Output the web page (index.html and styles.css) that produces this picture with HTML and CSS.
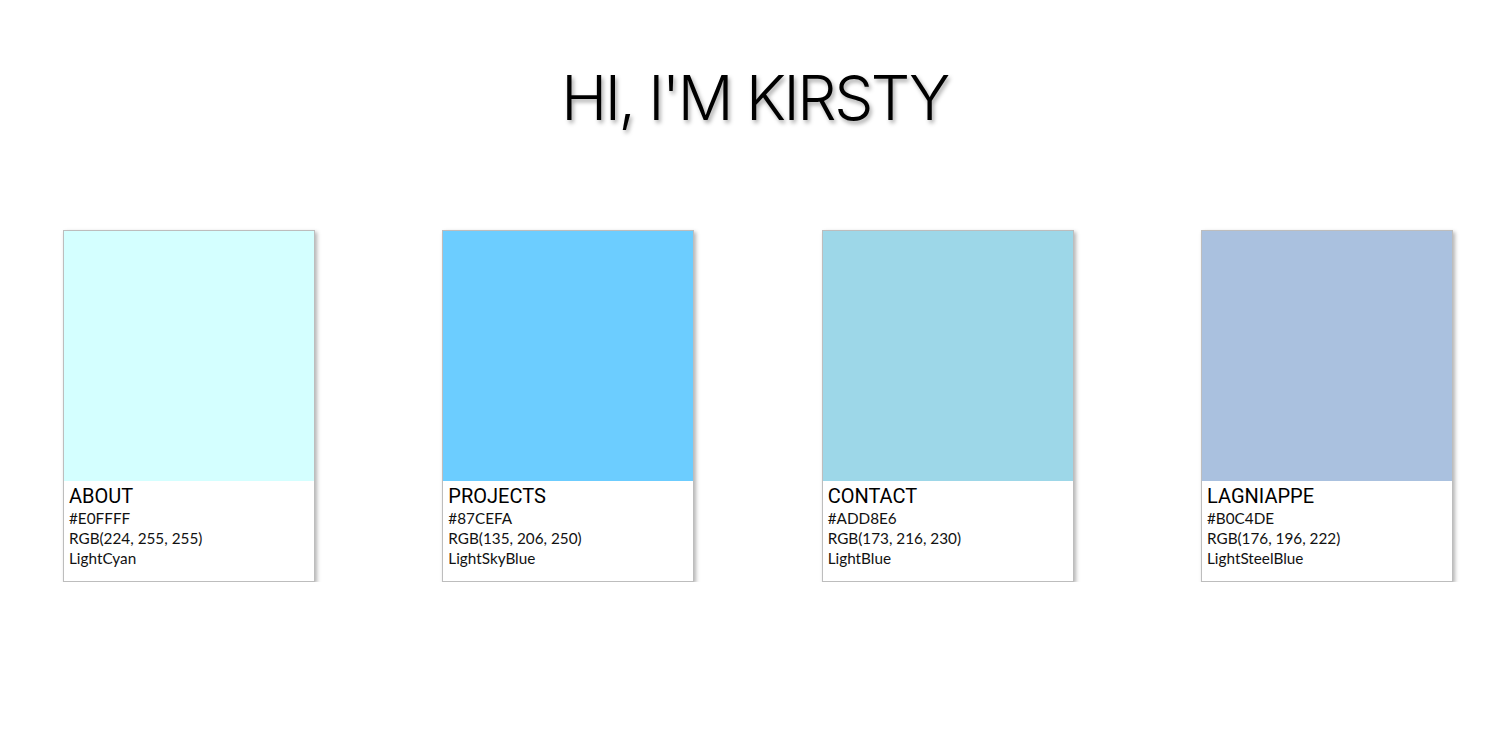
FILE: index.html
```html
<!DOCTYPE html>
<html lang="en">
<head>
<meta charset="utf-8">
<title>Kirsty</title>
<link rel="stylesheet" href="styles.css">
</head>
<body>
<header class="hero">
  <h1 class="hero-title">HI, I'M KIRSTY</h1>
</header>
<main class="cards">
  <div class="card">
    <div class="swatch swatch-about"></div>
    <div class="info">
      <div class="name">ABOUT</div>
      <div class="line">#E0FFFF</div>
      <div class="line">RGB(224, 255, 255)</div>
      <div class="line">LightCyan</div>
    </div>
  </div>
  <div class="card">
    <div class="swatch swatch-projects"></div>
    <div class="info">
      <div class="name">PROJECTS</div>
      <div class="line">#87CEFA</div>
      <div class="line">RGB(135, 206, 250)</div>
      <div class="line">LightSkyBlue</div>
    </div>
  </div>
  <div class="card">
    <div class="swatch swatch-contact"></div>
    <div class="info">
      <div class="name">CONTACT</div>
      <div class="line">#ADD8E6</div>
      <div class="line">RGB(173, 216, 230)</div>
      <div class="line">LightBlue</div>
    </div>
  </div>
  <div class="card">
    <div class="swatch swatch-lagniappe"></div>
    <div class="info">
      <div class="name">LAGNIAPPE</div>
      <div class="line">#B0C4DE</div>
      <div class="line">RGB(176, 196, 222)</div>
      <div class="line">LightSteelBlue</div>
    </div>
  </div>
</main>
</body>
</html>
```
FILE: styles.css
```css
html, body {
  margin: 0;
  padding: 0;
  background: #ffffff;
  color: #111111;
  font-family: Lato, "Open Sans", sans-serif;
}

.hero {
  display: flex;
  justify-content: center;
  padding-top: 62px;
  height: 168px;
  box-sizing: border-box;
}

.hero-title {
  margin: 0;
  font-family: Inter, Lato, sans-serif;
  font-weight: 300;
  font-size: 62px;
  line-height: 72px;
  letter-spacing: -2.5px;
  color: #000000;
  text-shadow: 2px 3px 4px rgba(0, 0, 0, 0.35);
}

.cards {
  display: flex;
  justify-content: space-between;
  padding: 62px 56px 0 63px;
}

.card {
  width: 250px;
  height: 350px;
  border: 1px solid #bdbdbd;
  box-shadow: 2px 2px 4px rgba(0, 0, 0, 0.3);
  background: #ffffff;
  display: flex;
  flex-direction: column;
}

.swatch {
  height: 250px;
}

.swatch-about { background: #d4ffff; }
.swatch-projects { background: #6ccdff; }
.swatch-contact { background: #9dd7e8; }
.swatch-lagniappe { background: #aac1df; }

.info {
  padding: 3px 5px 0 5px;
}

.name {
  font-family: Roboto, sans-serif;
  font-size: 20px;
  line-height: 24px;
  color: #000000;
}

.line {
  font-size: 15.3px;
  line-height: 20px;
  color: #111111;
}
```
